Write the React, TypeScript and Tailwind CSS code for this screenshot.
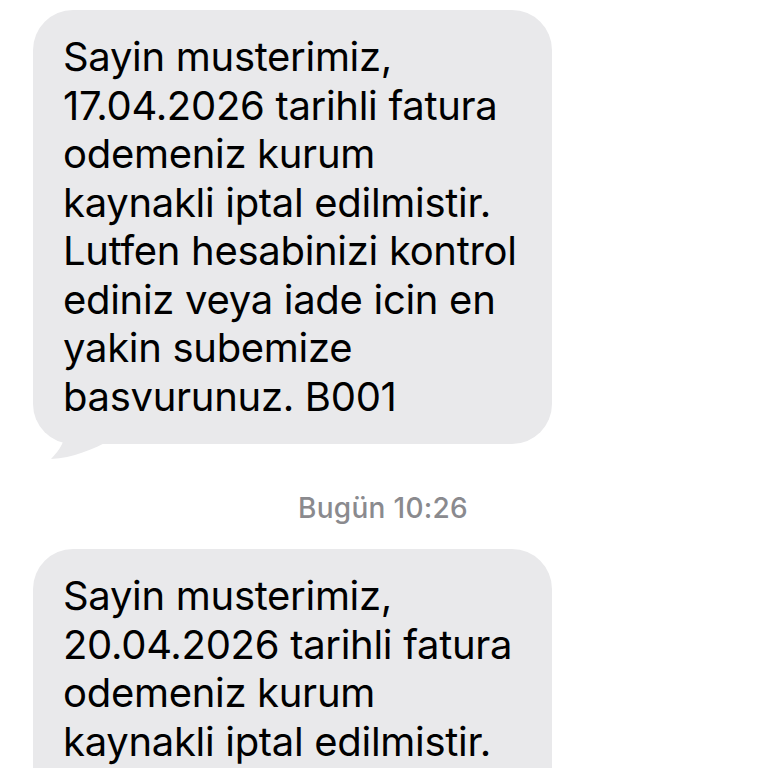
import React from "react";

const lines1 = [
  "Sayin musterimiz,",
  "17.04.2026 tarihli fatura",
  "odemeniz kurum",
  "kaynakli iptal edilmistir.",
  "Lutfen hesabinizi kontrol",
  "ediniz veya iade icin en",
  "yakin subemize",
  "basvurunuz. B001",
];
const lines2 = [
  "Sayin musterimiz,",
  "20.04.2026 tarihli fatura",
  "odemeniz kurum",
  "kaynakli iptal edilmistir.",
  "Lutfen hesabinizi kontrol",
  "ediniz veya iade icin en",
  "yakin subemize",
  "basvurunuz. B001",
];

function Bubble({ lines, tail }: { lines: string[]; tail?: boolean }) {
  return (
    <div className="relative w-[519px]">
      {tail && (
        <svg
          className="absolute left-[10px] top-full -mt-[50px]"
          width="90"
          height="66"
          viewBox="0 0 90 66"
        >
          <path
            d="M23 0 C23 30 28 45 8 65 C30 64 50 55 68 46 L60 30 Z"
            fill="#e9e9eb"
          />
        </svg>
      )}
      <div className="relative rounded-[40px] bg-[#e9e9eb] pl-[30px] pr-[20px] pt-[23px] pb-[23px] text-[40px] leading-[48.5px] text-black tracking-[-0.3px] font-['Inter','Liberation_Sans',sans-serif]">
        {lines.map((l, i) => (
          <div key={i} className="whitespace-nowrap">
            {l}
          </div>
        ))}
      </div>
    </div>
  );
}

export default function App() {
  return (
    <div className="w-[768px] h-[768px] overflow-hidden bg-white pl-[33px] pt-[10px]">
      <Bubble lines={lines1} tail />
      <div className="mt-[47px] w-[700px] text-center">
        <span className="text-[28px] leading-[34px] text-[#8a8a8e] font-medium tracking-[0.3px] font-['Inter','Liberation_Sans',sans-serif]">
          Bugün 10:26
        </span>
      </div>
      <div className="mt-[24px]">
        <Bubble lines={lines2} />
      </div>
    </div>
  );
}
